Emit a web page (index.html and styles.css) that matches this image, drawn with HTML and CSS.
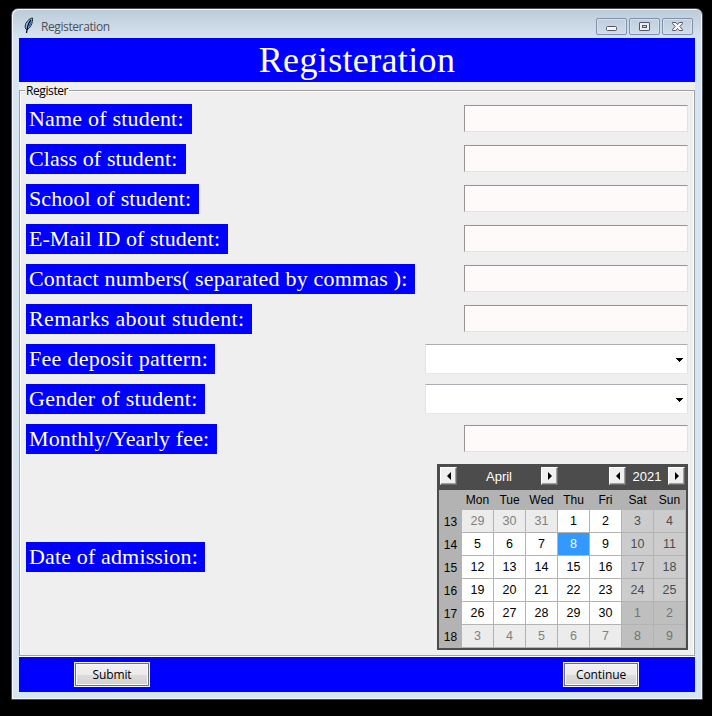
FILE: index.html
```html
<!DOCTYPE html>
<html lang="en">
<head>
<meta charset="utf-8">
<title>Registeration</title>
<link rel="stylesheet" href="styles.css">
</head>
<body>
<main class="window">
  <header class="titlebar">
    <svg class="feather" width="10" height="18" viewBox="0 0 10 18"><path d="M8.500 1C5 1.500 1.500 5.500 1.200 9c-.1 2 .3 3 1.500 3.700C6.500 11.500 9 5.500 8.500 1Z" fill="#8dbbe8" stroke="#172536"/><path d="M7 3C4.500 5.500 3.300 9 2.500 16" stroke="#000" stroke-width="1.200" fill="none"/><path d="M7.500 4.500 5 9.500" stroke="#2e73c0" stroke-width="1.500"/></svg>
    <span class="caption">Registeration</span>
    <div class="controls">
      <span class="control"><svg width="29" height="15" viewBox="0 0 29 15"><rect x="9.500" y="7.500" width="10" height="4" rx="1" fill="#f6f6f6" stroke="#535666"/></svg></span>
      <span class="control"><svg width="29" height="15" viewBox="0 0 29 15"><rect x="9.500" y="3.500" width="10" height="8" rx=".5" fill="#eee" stroke="#535666"/><rect x="12.500" y="6.500" width="4" height="2" fill="#c6d5e5" stroke="#535666"/></svg></span>
      <span class="control"><svg width="29" height="15" viewBox="0 0 29 15"><path d="M9.500 3.500h3.300l1.700 2 1.700-2h3.300v1l-2.700 3 2.700 3v1h-3.300l-1.700-2-1.700 2H9.500v-1l2.700-3-2.700-3Z" fill="#fafafa" stroke="#535666"/></svg></span>
    </div>
  </header>
  <section class="client">
    <h1 class="banner">Registeration</h1>
    <fieldset class="group">
      <legend>Register</legend>
      <div class="row"><label class="tag name" for="name">Name of student:</label><input id="name" class="entry"></div>
      <div class="row"><label class="tag class" for="class">Class of student:</label><input id="class" class="entry"></div>
      <div class="row"><label class="tag school" for="school">School of student:</label><input id="school" class="entry"></div>
      <div class="row"><label class="tag email" for="email">E-Mail ID of student:</label><input id="email" class="entry"></div>
      <div class="row"><label class="tag contact" for="contact">Contact numbers( separated by commas ):</label><input id="contact" class="entry"></div>
      <div class="row"><label class="tag remarks" for="remarks">Remarks about student:</label><input id="remarks" class="entry"></div>
      <div class="row"><span class="tag pattern">Fee deposit pattern:</span><div class="combo"><svg width="7" height="4"><path d="M0 0h7v1H6v1H5v1H4v1H3V3H2V2H1V1H0Z"/></svg></div></div>
      <div class="row"><span class="tag gender">Gender of student:</span><div class="combo"><svg width="7" height="4"><path d="M0 0h7v1H6v1H5v1H4v1H3V3H2V2H1V1H0Z"/></svg></div></div>
      <div class="row"><label class="tag fee" for="fee">Monthly/Yearly fee:</label><input id="fee" class="entry"></div>
      <div class="row tall"><span class="tag date">Date of admission:</span>
        <div class="calendar">
          <div class="nav">
            <span class="arrow"><svg width="4" height="8"><path d="M4 0v8L0 4Z"/></svg></span><span class="month">April</span><span class="arrow"><svg width="4" height="8"><path d="M0 0v8l4-4Z"/></svg></span>
            <span class="arrow prev-year"><svg width="4" height="8"><path d="M4 0v8L0 4Z"/></svg></span><span class="year">2021</span><span class="arrow"><svg width="4" height="8"><path d="M0 0v8l4-4Z"/></svg></span>
          </div>
          <div class="days">
            <b></b><b>Mon</b><b>Tue</b><b>Wed</b><b>Thu</b><b>Fri</b><b>Sat</b><b>Sun</b>
            <i>13</i><span class="out">29</span><span class="out">30</span><span class="out">31</span><span>1</span><span>2</span><span class="we">3</span><span class="we">4</span>
            <i>14</i><span>5</span><span>6</span><span>7</span><span class="sel">8</span><span>9</span><span class="we">10</span><span class="we">11</span>
            <i>15</i><span>12</span><span>13</span><span>14</span><span>15</span><span>16</span><span class="we">17</span><span class="we">18</span>
            <i>16</i><span>19</span><span>20</span><span>21</span><span>22</span><span>23</span><span class="we">24</span><span class="we">25</span>
            <i>17</i><span>26</span><span>27</span><span>28</span><span>29</span><span>30</span><span class="we-out">1</span><span class="we-out">2</span>
            <i>18</i><span class="out">3</span><span class="out">4</span><span class="out">5</span><span class="out">6</span><span class="out">7</span><span class="we-out">8</span><span class="we-out">9</span>
          </div>
        </div>
      </div>
    </fieldset>
    <footer class="actions"><button>Submit</button><button>Continue</button></footer>
  </section>
</main>
</body>
</html>
```
FILE: styles.css
```css
* { box-sizing: border-box; }
body { margin: 0; height: 716px; padding: 8px 9px 16px 11px; background: #000; overflow: hidden; font-family: "Open Sans", sans-serif; font-size: 12px; }
.window { height: 692px; border: 1px solid #4b4d50; border-radius: 7px 7px 0 0; box-shadow: inset 1px 1px #f5f8fc, inset -1px -1px #eef6fb; background: linear-gradient(#bccbd8, #d7e4f2 30px); padding: 0 7px 7px; }
.titlebar { height: 29px; display: flex; align-items: flex-start; }
.feather { margin: 8px 0 0 5px; }
.caption { margin: 9px auto 0 7px; line-height: 18px; color: #4a5058; letter-spacing: -.4px; }
.controls { display: flex; gap: 2px; margin: 9px 2px 0 0; }
.control { width: 31px; height: 17px; border: 1px solid #8491ae; border-radius: 2px; background: linear-gradient(#c1cfdd, #cfddeb); box-shadow: inset 0 0 0 1px #d3e0ed; }
.control svg { display: block; }
.client { height: 654px; background: #efefef; }
.banner { margin: 0; height: 44px; background: #00f; color: #fff; font: 36px/45px "Liberation Serif", serif; letter-spacing: .35px; text-align: center; }
.group { position: relative; margin: 8px 0 0; height: 566px; border: 1px solid #a0a0a0; box-shadow: inset 1px 1px #fff, inset -1px 0 #fff, 0 1px #fff; padding: 8px 6px 0; min-width: 0; }
.group legend { position: absolute; left: 5px; top: -8px; line-height: 16px; background: #efefef; padding: 0 1px; letter-spacing: -.4px; }
.row { height: 40px; display: flex; align-items: center; justify-content: space-between; }
.row.tall { height: 196px; }
.tag { height: 30px; padding-left: 3px; background: #00f; color: #fff; font: 22px/30px "Liberation Serif", serif; white-space: nowrap; }
.name { width: 166px; letter-spacing: .2px; }
.class { width: 160px; letter-spacing: .1px; }
.school { width: 173px; letter-spacing: .12px; }
.email { width: 202px; letter-spacing: .05px; }
.contact { width: 389px; letter-spacing: .2px; }
.remarks { width: 226px; letter-spacing: .35px; }
.pattern { width: 189px; letter-spacing: .28px; }
.gender { width: 179px; letter-spacing: .27px; }
.date { width: 179px; letter-spacing: .15px; }
.fee { width: 191px; letter-spacing: .12px; }
.entry { width: 224px; height: 27px; margin: 0 0 1px; padding: 0 3px; border: 1px solid; border-color: #949494 #e3e3e3 #e3e3e3 #949494; background: #fffafa; border-radius: 0; outline: 0; }
.combo { width: 263px; height: 30px; border: 1px solid; border-color: #abadb3 #e2e3ea #e3e9ef #e2e3ea; border-radius: 1px; background: #fff; display: flex; align-items: center; justify-content: flex-end; padding: 2px 4px 0 0; }
.calendar { width: 251px; height: 186px; border: 2px solid #4c4c4c; border-top: 0; background: #b3b3b3; font: 12px "Liberation Sans", sans-serif; }
.nav { height: 26px; background: #4c4c4c; color: #fff; display: flex; align-items: center; font-size: 13px; padding: 0 1px 2px; }
.arrow { width: 17px; height: 18px; display: flex; align-items: center; justify-content: center; background: #efefef; border: 1px solid; border-color: #fff #696969 #696969 #fff; box-shadow: inset -1px -1px #a0a0a0; }
.month { width: 84px; text-align: center; }
.prev-year { margin-left: 51px; }
.year { width: 42px; text-align: center; }
.days { display: grid; grid-template-columns: 23px repeat(7, 32px); grid-template-rows: 20px repeat(6, 23px); }
.days > * { display: flex; align-items: center; justify-content: center; font-style: normal; font-weight: 400; color: #000; }
.days b { padding-right: 1px; }
.days i { padding-top: 1px; }
.days span { background: #fff; border-right: 1px solid #b3b3b3; border-bottom: 1px solid #b3b3b3; font-size: 12.500px; }
.days .out { background: #ececec; color: #808080; }
.days .we { background: #ccc; color: #4d4d4d; }
.days .we-out { background: #bfbfbf; color: #737373; }
.days .sel { background: #3399ff; color: #fff; }
.actions { height: 35px; margin-top: 1px; background: #00f; display: flex; justify-content: space-between; align-items: center; padding: 0 56px 0 55px; }
button { width: 76px; height: 25px; padding: 0; border: 1px solid #f0f0f0; box-shadow: inset 0 0 0 1px #707070, inset 0 0 0 2px #f7f7f7; background: linear-gradient(#f2f2f2, #ebebeb 50%, #ddd 51%, #cfcfcf); color: #000; font: 12px/21px "Open Sans", sans-serif; letter-spacing: -.1px; }
```
